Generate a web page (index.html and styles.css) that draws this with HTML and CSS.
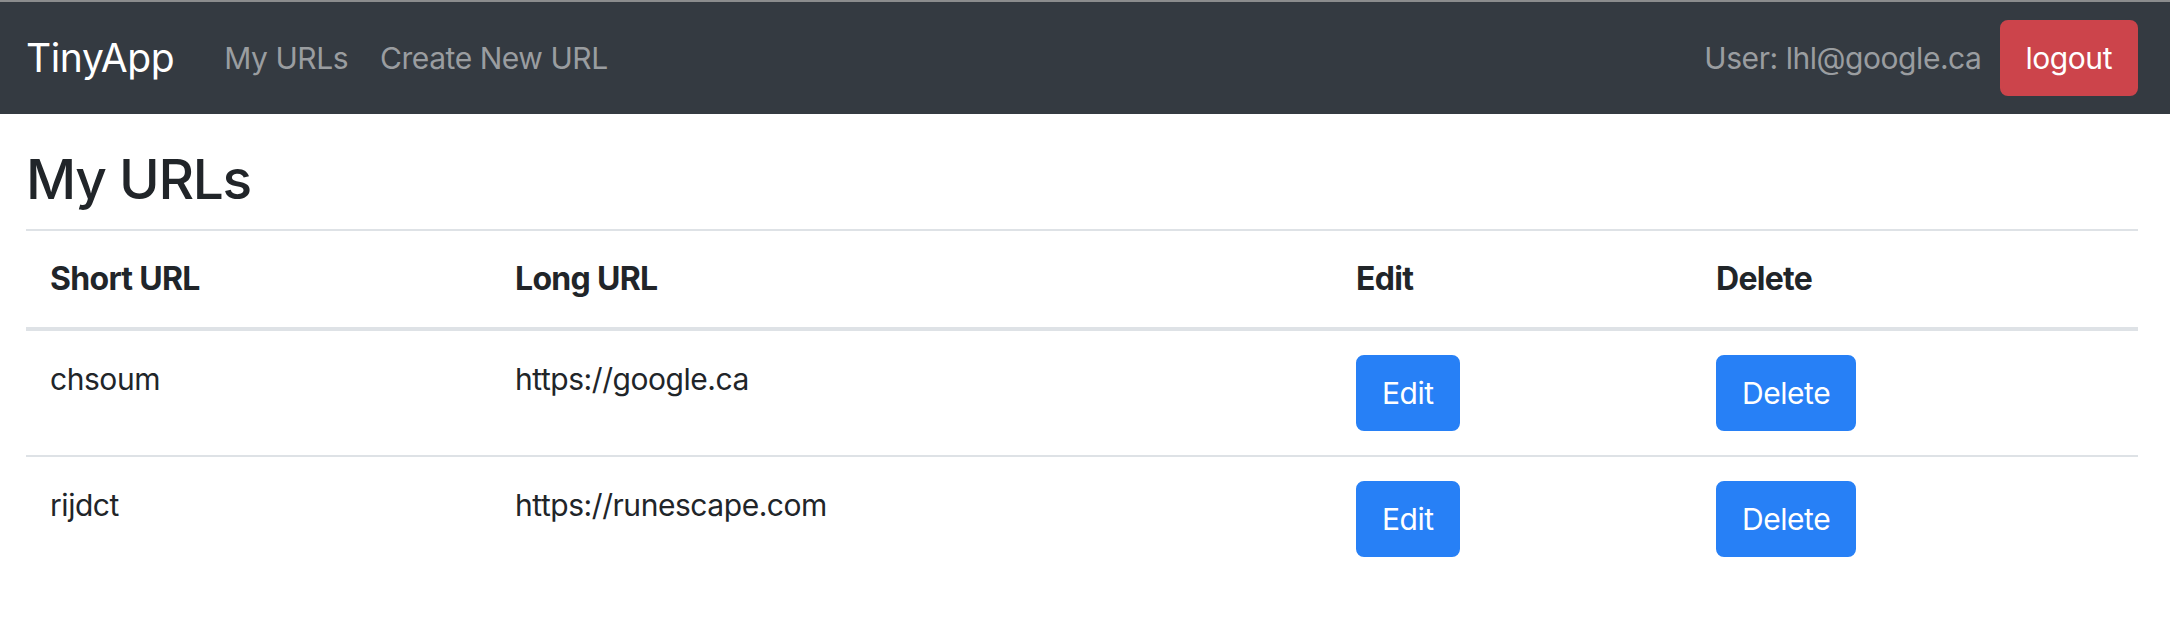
FILE: index.html
```html
<!DOCTYPE html>
<html lang="en">
<head>
<meta charset="utf-8">
<title>TinyApp</title>
<link rel="stylesheet" href="styles.css">
</head>
<body>
<nav class="navbar">
  <a class="brand" href="#">TinyApp</a>
  <ul class="nav-links">
    <li><a class="nav-link" href="#">My URLs</a></li>
    <li><a class="nav-link" href="#">Create New URL</a></li>
  </ul>
  <div class="nav-right">
    <span class="user">User: lhl@google.ca</span>
    <button class="btn btn-danger" type="button">logout</button>
  </div>
</nav>
<main class="container">
  <h3 class="title">My URLs</h3>
  <table class="urls">
    <colgroup>
      <col class="col-short">
      <col class="col-long">
      <col class="col-edit">
      <col class="col-delete">
    </colgroup>
    <thead>
      <tr>
        <th>Short URL</th>
        <th>Long URL</th>
        <th>Edit</th>
        <th>Delete</th>
      </tr>
    </thead>
    <tbody>
      <tr>
        <td>chsoum</td>
        <td>https://google.ca</td>
        <td><button class="btn btn-primary" type="button">Edit</button></td>
        <td><button class="btn btn-primary" type="button">Delete</button></td>
      </tr>
      <tr>
        <td>rijdct</td>
        <td>https://runescape.com</td>
        <td><button class="btn btn-primary" type="button">Edit</button></td>
        <td><button class="btn btn-primary" type="button">Delete</button></td>
      </tr>
    </tbody>
  </table>
</main>
</body>
</html>
```

FILE: styles.css
```css
* {
  box-sizing: border-box;
}

html, body {
  margin: 0;
  padding: 0;
  background: #ffffff;
}

body {
  font-family: "Inter", "Noto Sans", sans-serif;
  font-size: 30px;
  line-height: 48px;
  letter-spacing: -0.45px;
  color: #212529;
}

.navbar {
  display: flex;
  align-items: center;
  height: 114px;
  border-top: 2px solid #8b8c8d;
  background: #343a41;
  padding: 0 32px 0 26px;
}

.brand {
  font-size: 39px;
  line-height: 60px;
  color: #ffffff;
  text-decoration: none;
  margin-right: 34px;
  letter-spacing: -0.4px;
}

.nav-links {
  display: flex;
  list-style: none;
  margin: 0;
  padding: 0;
}

.nav-link {
  display: block;
  padding: 0 16px;
  color: #9a9da0;
  text-decoration: none;
}

.nav-right {
  margin-left: auto;
  display: flex;
  align-items: center;
  gap: 18px;
}

.user {
  color: #9a9da0;
}

.btn {
  display: inline-block;
  vertical-align: top;
  font-family: inherit;
  font-size: 30px;
  line-height: 48px;
  letter-spacing: -0.45px;
  padding: 12px 24px;
  border: 2px solid transparent;
  border-radius: 8px;
  color: #ffffff;
  cursor: pointer;
}

.btn-danger {
  background: #cc444b;
  border-color: #cc444b;
}

.btn-primary {
  background: #2780f6;
  border-color: #2780f6;
}

.container {
  padding: 32px 32px 0 26px;
}

.title {
  margin: 0 0 16px 0;
  font-size: 55px;
  font-weight: 500;
  line-height: 67px;
  letter-spacing: -1.3px;
}

.urls {
  width: 2112px;
  border-collapse: collapse;
  table-layout: fixed;
}

.col-short { width: 465px; }
.col-long { width: 841px; }
.col-edit { width: 360px; }
.col-delete { width: 446px; }

.urls th,
.urls td {
  text-align: left;
  vertical-align: top;
  padding: 24px;
  border-top: 2px solid #dee2e6;
}

.urls th {
  font-size: 32px;
  font-weight: 700;
  letter-spacing: -0.7px;
}

.urls thead th {
  border-bottom: 4px solid #dee2e6;
}

.urls tbody tr:first-child td {
  border-top: 0;
}
```
